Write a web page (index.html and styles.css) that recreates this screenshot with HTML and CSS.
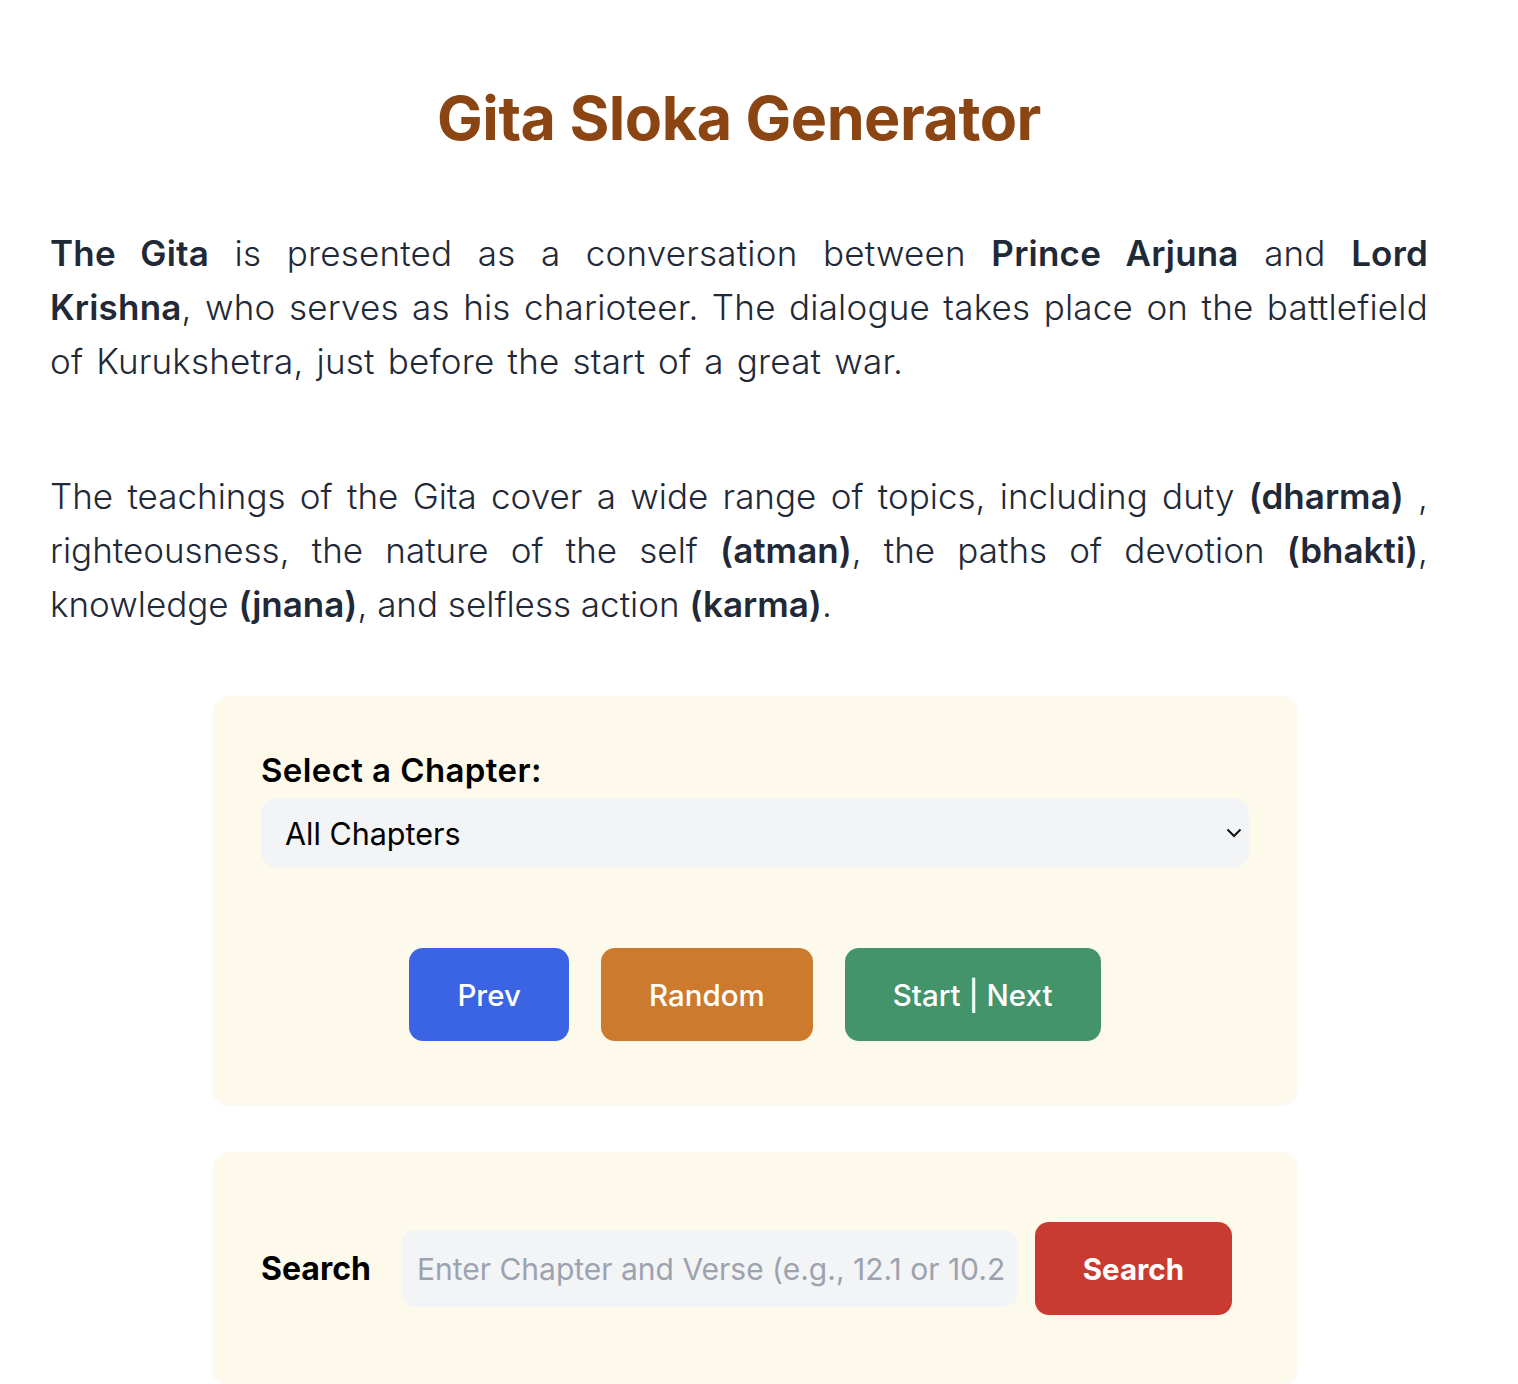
FILE: index.html
```html
<!DOCTYPE html>
<html lang="en">
<head>
<meta charset="utf-8">
<title>Gita Sloka Generator</title>
<link rel="stylesheet" href="styles.css">
</head>
<body>
<main class="page">
  <h1 class="title">Gita Sloka Generator</h1>
  <p class="intro intro-first"><strong>The Gita</strong> is presented as a conversation between <strong>Prince Arjuna</strong> and <strong>Lord Krishna</strong>, who serves as his charioteer. The dialogue takes place on the battlefield of Kurukshetra, just before the start of a great war.</p>
  <p class="intro intro-second">The teachings of the Gita cover a wide range of topics, including duty <strong>(dharma)</strong> , righteousness, the nature of the self <strong>(atman)</strong>, the paths of devotion <strong>(bhakti)</strong>, knowledge <strong>(jnana)</strong>, and selfless action <strong>(karma)</strong>.</p>

  <section class="card card-chapter">
    <label class="field-label" for="chapter">Select a Chapter:</label>
    <div class="select-wrap">
      <div class="select" id="chapter">All Chapters</div>
      <svg class="chevron" width="16" height="10" viewBox="0 0 16 10" aria-hidden="true"><path d="M1.5 1.5 L8 8 L14.5 1.5" fill="none" stroke="#111" stroke-width="2"/></svg>
    </div>
    <div class="actions">
      <button class="btn btn-prev">Prev</button>
      <button class="btn btn-random">Random</button>
      <button class="btn btn-next">Start | Next</button>
    </div>
  </section>

  <section class="card card-search">
    <div class="search-row">
      <span class="search-label">Search</span>
      <div class="search-input">Enter Chapter and Verse (e.g., 12.1 or 10.2</div>
      <button class="btn btn-search">Search</button>
    </div>
  </section>
</main>
</body>
</html>
```
FILE: styles.css
```css
html, body {
  margin: 0;
  padding: 0;
  background: #ffffff;
}
body {
  font-family: "Inter", "Noto Sans", sans-serif;
  color: #1f2937;
}
.page {
  padding: 82px 90px 0 50px;
}
.title {
  margin: 0;
  text-align: center;
  font-family: "Inter", sans-serif;
  font-weight: 700;
  font-size: 61px;
  line-height: 72px;
  color: #8b4513;
  letter-spacing: -0.5px;
}
.intro {
  margin: 72px 0 0 0;
  font-size: 35px;
  line-height: 54px;
  font-weight: 300;
  text-align: justify;
}
.intro-first {
  letter-spacing: 0.2px;
  word-spacing: 3px;
}
.intro strong {
  font-weight: 600;
}
.intro-second {
  margin-top: 81px;
}
.card {
  background: #fefaeb;
  border-radius: 16px;
  margin-left: 163px;
  width: 1084px;
  box-sizing: border-box;
  box-shadow: 0 1px 3px rgba(0,0,0,0.04);
}
.card-chapter {
  margin-top: 65px;
  padding: 52px 48px 64px 48px;
}
.field-label {
  display: block;
  font-size: 33px;
  line-height: 44px;
  font-weight: 600;
  color: #000;
  margin-bottom: 6px;
  letter-spacing: 0.4px;
}
.select-wrap {
  position: relative;
}
.select {
  height: 70px;
  background: #f3f4f6;
  border-radius: 16px;
  padding: 0 24px;
  display: flex;
  align-items: center;
  font-size: 30.5px;
  color: #000;
}
.chevron {
  position: absolute;
  right: 7px;
  top: 30px;
}
.actions {
  display: flex;
  justify-content: center;
  gap: 32px;
  margin-top: 80px;
}
.btn {
  border: none;
  height: 93px;
  padding: 0 48px;
  border-radius: 14px;
  color: #fff;
  font-family: "Inter", sans-serif;
  font-size: 29.5px;
  font-weight: 500;
}
.btn-prev { background: #3a64e3; }
.btn-random { background: #cb7a2e; }
.btn-next { background: #44946b; }
.card-search {
  margin-top: 47px;
  padding: 70px 64px 70px 48px;
}
.search-row {
  display: flex;
  align-items: center;
}
.search-label {
  font-size: 32px;
  font-weight: 700;
  color: #000;
  margin-right: 30px;
}
.search-input {
  width: 617px;
  height: 77px;
  box-sizing: border-box;
  background: #f3f4f6;
  border-radius: 14px;
  padding: 0 16px;
  display: flex;
  align-items: center;
  font-size: 30px;
  color: #9ca3af;
  white-space: nowrap;
  overflow: hidden;
}
.btn-search {
  margin-left: 17px;
  width: 197px;
  padding: 0;
  background: #c93b31;
  font-weight: 700;
}
```
